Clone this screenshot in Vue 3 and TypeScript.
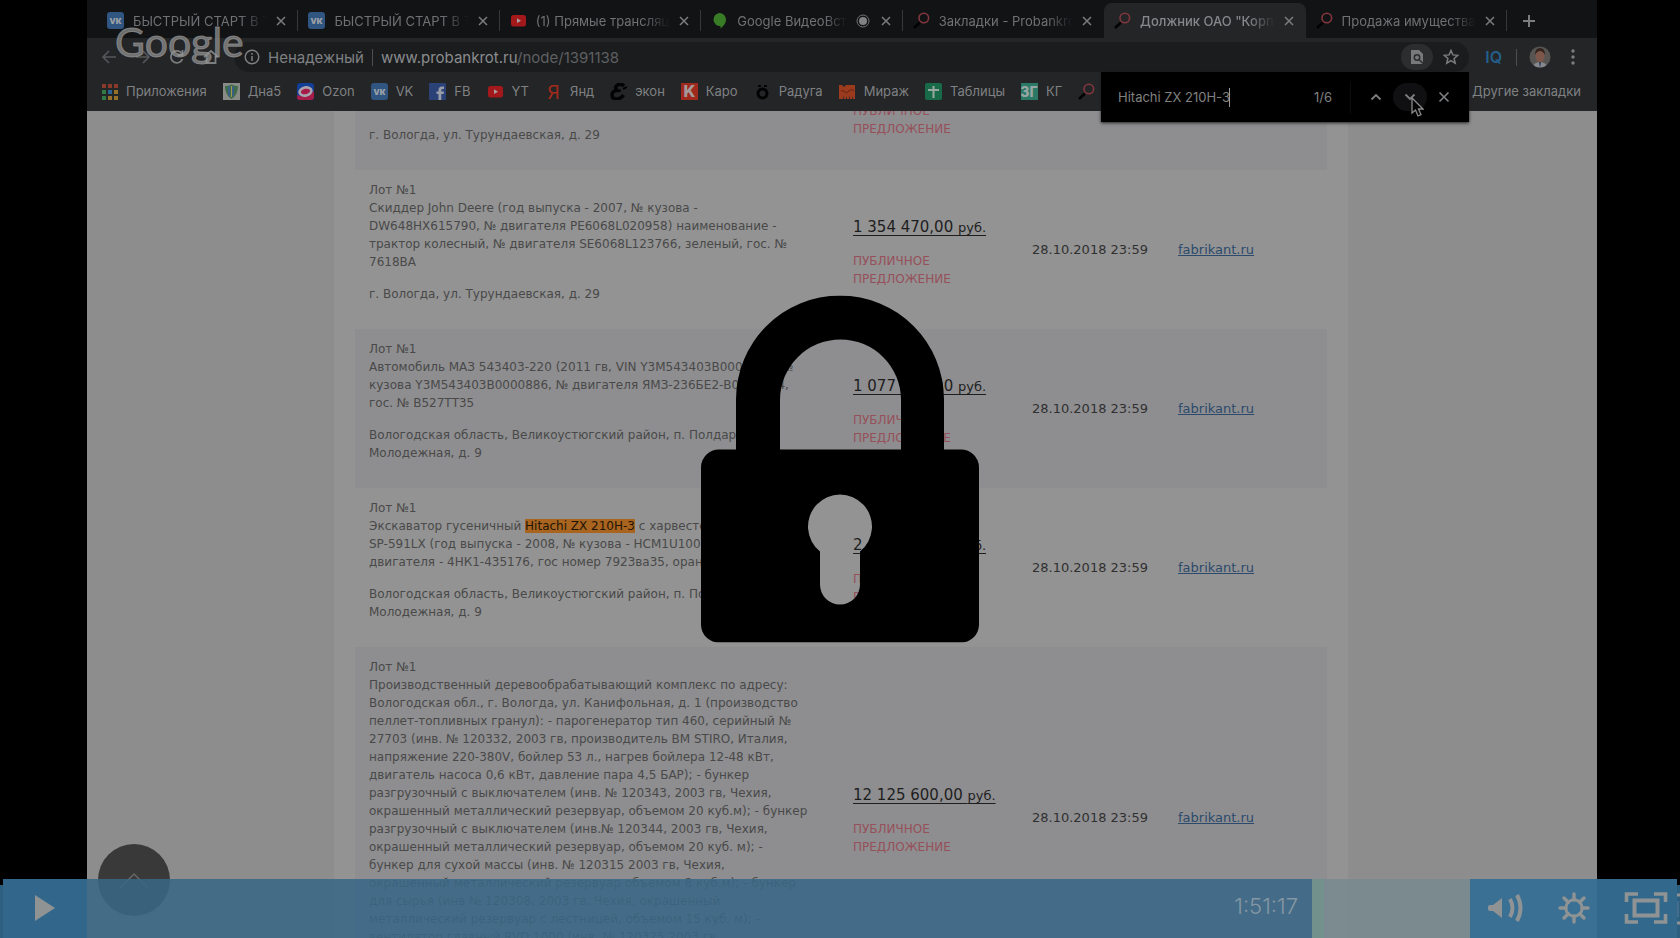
<script setup lang="ts">
import { ref } from 'vue'

interface Tab { icon: string; title: string; active?: boolean; recording?: boolean }
interface Bookmark { icon: string; label: string }
interface Lot {
  lines: string[]
  address: string[]
  hit?: string
  price: string
  tall?: boolean
}

const tabs: Tab[] = [
  { icon: 'vk', title: 'БЫСТРЫЙ СТАРТ В ТО' },
  { icon: 'vk', title: 'БЫСТРЫЙ СТАРТ В ТО' },
  { icon: 'yt', title: '(1) Прямые трансляц' },
  { icon: 'hangouts', title: 'Google ВидеоВстр', recording: true },
  { icon: 'glass', title: 'Закладки - Probankro' },
  { icon: 'glass', title: 'Должник ОАО "Корпо', active: true },
  { icon: 'glass', title: 'Продажа имущества' },
]

const bookmarks: Bookmark[] = [
  { icon: 'apps', label: 'Приложения' },
  { icon: 'shield', label: 'Дна5' },
  { icon: 'ozon', label: 'Ozon' },
  { icon: 'vk', label: 'VK' },
  { icon: 'fb', label: 'FB' },
  { icon: 'yt', label: 'YT' },
  { icon: 'ya', label: 'Янд' },
  { icon: 'econ', label: 'экон' },
  { icon: 'karo', label: 'Каро' },
  { icon: 'raduga', label: 'Радуга' },
  { icon: 'mirage', label: 'Мираж' },
  { icon: 'sheets', label: 'Таблицы' },
  { icon: 'kg', label: 'КГ' },
  { icon: 'glass', label: '' },
]

const lots: Lot[] = [
  {
    lines: [
      'Скиддер John Deere (год выпуска - 2007, № кузова -',
      'DW648HX615790, № двигателя PE6068L020958) наименование -',
      'трактор колесный, № двигателя SE6068L123766, зеленый, гос. №',
      '7618ВА',
    ],
    address: ['г. Вологда, ул. Турундаевская, д. 29'],
    price: '1 354 470,00',
  },
  {
    lines: [
      'Автомобиль МАЗ 543403-220 (2011 гв, VIN Y3M543403B0000886, №',
      'кузова Y3M543403B0000886, № двигателя ЯМЗ-236БЕ2-B0039034,',
      'гос. № В527ТТ35',
    ],
    address: ['Вологодская область, Великоустюгский район, п. Полдарса, ул.', 'Молодежная, д. 9'],
    price: '1 077 300,00',
  },
  {
    lines: [
      'Экскаватор гусеничный |с харвестерной головкой',
      'SP-591LX (год выпуска - 2008, № кузова - HCM1U100H00031, №',
      'двигателя - 4НК1-435176, гос номер 7923ва35, оранжевый',
    ],
    hit: 'Hitachi ZX 210H-3',
    address: ['Вологодская область, Великоустюгский район, п. Полдарса, ул.', 'Молодежная, д. 9'],
    price: '2 430 000,00',
  },
  {
    lines: [
      'Производственный деревообрабатывающий комплекс по адресу:',
      'Вологодская обл., г. Вологда, ул. Канифольная, д. 1 (производство',
      'пеллет-топливных гранул): - парогенератор тип 460, серийный №',
      '27703 (инв. № 120332, 2003 гв, производитель ВМ STIRO, Италия,',
      'напряжение 220-380V, бойлер 53 л., нагрев бойлера 12-48 кВт,',
      'двигатель насоса 0,6 кВт, давление пара 4,5 БАР); - бункер',
      'разгрузочный с выключателем (инв. № 120343, 2003 гв, Чехия,',
      'окрашенный металлический резервуар, объемом 20 куб.м); - бункер',
      'разгрузочный с выключателем (инв.№ 120344, 2003 гв, Чехия,',
      'окрашенный металлический резервуар, объемом 20 куб. м); -',
      'бункер для сухой массы (инв. № 120315 2003 гв, Чехия,',
      'окрашенный металлический резервуар объемом 8 куб.м); - бункер',
      'для сырья (инв № 120308, 2003 гв, Чехия, окрашенный',
      'металлический резервуар с лестницей, объемом 15 куб. м); -',
      'вентилятор главный RVD 1000 (инв. № 120325 2003 гв,',
    ],
    address: [],
    price: '12 125 600,00',
    tall: true,
  },
]

const url = ref('www.probankrot.ru/node/1391138')
const query = ref('Hitachi ZX 210H-3')
</script>

<template>
  <main class="player">
    <svg class="defs" aria-hidden="true">
      <symbol id="i-vk" viewBox="0 0 17 17"><rect width="17" height="17" rx="3" fill="#2f5580" /><text x="8.500" y="12" text-anchor="middle" font-family="Inter, sans-serif" font-weight="800" font-size="10" fill="#9a9fa6">vк</text></symbol>
      <symbol id="i-yt" viewBox="0 0 17 17"><rect x="1" y="3" width="15" height="11.500" rx="2.500" fill="#a3181b" /><path d="M7 6.300 11 8.700 7 11.100z" fill="#a8a0a0" /></symbol>
      <symbol id="i-hangouts" viewBox="0 0 17 17"><path d="M8.500 1a6.500 6.500 0 0 1 6.500 6.500c0 4-3 7-5.500 9V14A6.500 6.500 0 1 1 8.500 1z" fill="#387d26" /></symbol>
      <symbol id="i-glass" viewBox="0 0 17 17"><path d="M7 10.500 1 16" stroke="#020202" stroke-width="2.500" /><circle cx="10.800" cy="6" r="4.800" fill="none" stroke="#81373d" stroke-width="1.600" /></symbol>
      <symbol id="i-apps" viewBox="0 0 17 17">
        <path d="M1 1h4v4H1zM7 1h4v4H7zM13 1h4v4h-4z" fill="#8a3a2a" /><path d="M1 7h4v4H1z" fill="#2f7a45" /><path d="M7 7h4v4H7z" fill="#2c6395" /><path d="M13 7h4v4h-4zM7 13h4v4H7zM13 13h4v4h-4z" fill="#94702b" /><path d="M1 13h4v4H1z" fill="#2f7a45" />
      </symbol>
      <symbol id="i-shield" viewBox="0 0 17 17"><path d="M0 0h17v17H0z" fill="#898c86" /><path d="M2 3q3 0 6.500-1.500Q12 3 15 3q0 9-6.500 13Q2 12 2 3z" fill="#3f6b4b" /><path d="M5 4v8l2 2V3zM11 4v8l-2 2V3z" fill="#385f87" /><path d="M8 3h1v11H8z" fill="#a19a49" /></symbol>
      <symbol id="i-ozon" viewBox="0 0 17 17"><rect width="17" height="17" rx="3" fill="#123e96" /><path d="M0 12q8 4 17-4v6q0 3-3 3H3q-3 0-3-3z" fill="#a51c49" /><ellipse cx="8.500" cy="8.500" rx="6" ry="4" fill="#a51c49" stroke="#a9a4b0" stroke-width="2.600" transform="rotate(-12 8.500 8.500)" /></symbol>
      <symbol id="i-fb" viewBox="0 0 17 17"><rect width="17" height="17" rx="1" fill="#2b4278" /><path d="M9.500 17v-6H7.500V8.500h2V7q0-3.500 3.500-3.500h2V6h-1.500Q12.300 6 12.300 7.300v1.200H15L14.600 11h-2.300v6z" fill="#989da8" /></symbol>
      <symbol id="i-ya" viewBox="0 0 17 17"><text x="8.500" y="15.500" text-anchor="middle" font-family="Inter, sans-serif" font-size="19" fill="#a32b1c">Я</text></symbol>
      <symbol id="i-econ" viewBox="0 0 17 17"><path d="M14 3Q11 0 7.500 2T7 7.500Q2 8 2 12t4.500 4 7-4" fill="none" stroke="#030303" stroke-width="3.500" /><path d="M7 7.500h4M13 6l4-2" stroke="#030303" stroke-width="2" /></symbol>
      <symbol id="i-karo" viewBox="0 0 17 17"><path d="M0 0h17v17H0z" fill="#a0291e" /><text x="8.500" y="14" text-anchor="middle" font-family="Inter, sans-serif" font-weight="800" font-size="16" fill="#a39b99">K</text></symbol>
      <symbol id="i-raduga" viewBox="0 0 17 17"><circle cx="8.500" cy="10.500" r="4.500" fill="none" stroke="#030303" stroke-width="3" /><path d="M4 2h3v2H4zM10 2h3v2h-3z" fill="#030303" /></symbol>
      <symbol id="i-mirage" viewBox="0 0 17 17"><path d="M0 2h3l2 2 2-2h9v14h-2v-3l-1 3h-2v-4l-1 4H8v-3l-1 3H5v-4l-1 4H0z" fill="#9b3a1c" /><path d="M2 8q3-1 4 1t4-1 5 0" fill="none" stroke="#5f2416" /></symbol>
      <symbol id="i-sheets" viewBox="0 0 17 17"><rect width="17" height="17" rx="2" fill="#186a48" /><path d="M8.500 3v12M3 7h11" stroke="#98a79f" stroke-width="2" /></symbol>
      <symbol id="i-kg" viewBox="0 0 17 17"><path d="M0 0h17v17H0z" fill="#2c7867" /><text x="8" y="14" text-anchor="middle" font-family="Inter, sans-serif" font-weight="800" font-size="14" fill="#98a7a3">ЗГ</text></symbol>
    </svg>

    <section class="browser">
      <header class="chrome">
        <nav class="tabs" aria-label="Вкладки">
          <div v-for="(tab, i) in tabs" :key="i" class="tab" :class="{ active: tab.active }">
            <svg class="icon"><use :href="'#i-' + tab.icon" /></svg>
            <span class="title">{{ tab.title }}</span>
            <svg v-if="tab.recording" class="rec" viewBox="0 0 14 14"><circle cx="7" cy="7" r="6" fill="none" stroke="#6f7173" /><circle cx="7" cy="7" r="4" fill="#808284" /></svg>
            <button class="plain" aria-label="Закрыть вкладку"><svg width="10" height="10" viewBox="0 0 10 10"><path d="m1 1 8 8M9 1 1 9" stroke="currentColor" stroke-width="1.500" /></svg></button>
          </div>
          <button class="plain add" aria-label="Новая вкладка"><svg width="14" height="14" viewBox="0 0 14 14"><path d="M7 1v12M1 7h12" stroke="currentColor" stroke-width="2" /></svg></button>
        </nav>

        <div class="toolbar">
          <div class="navs">
            <button class="plain dim" aria-label="Назад"><svg width="16" height="16" viewBox="0 0 16 16"><path d="M15 8H2m6-6L2 8l6 6" fill="none" stroke="currentColor" stroke-width="1.600" /></svg></button>
            <button class="plain dim" aria-label="Вперед"><svg width="16" height="16" viewBox="0 0 16 16"><path d="M1 8h13M8 2l6 6-6 6" fill="none" stroke="currentColor" stroke-width="1.600" /></svg></button>
            <button class="plain" aria-label="Обновить"><svg width="16" height="16" viewBox="0 0 16 16"><path d="M13.500 10A6 6 0 1 1 12.500 4M13.500 1v5h-5" fill="none" stroke="currentColor" stroke-width="1.800" /></svg></button>
            <button class="plain" aria-label="Домой"><svg width="16" height="16" viewBox="0 0 16 16"><path d="M1 8l7-6 7 6M3.500 7v7h9V7" fill="none" stroke="currentColor" stroke-width="1.800" /></svg></button>
          </div>
          <div class="omnibox">
            <svg width="16" height="16" viewBox="0 0 16 16"><circle cx="8" cy="8" r="6.800" fill="none" stroke="currentColor" stroke-width="1.400" /><path d="M8 7v5M8 4v1.700" stroke="currentColor" stroke-width="1.500" /></svg>
            <span class="warn">Ненадежный</span>
            <span class="bar"></span>
            <a class="url" :href="'#' + url">www.probankrot.ru<i>/node/1391138</i></a>
            <button class="plain round" aria-label="Найти"><svg width="14" height="16" viewBox="0 0 14 16"><path d="M1 1h8l4 4v10H1z" fill="#77797b" /><circle cx="7" cy="8.500" r="2.700" fill="none" stroke="#2a2b2d" stroke-width="1.500" /><path d="m9 10.500 4 4" stroke="#2a2b2d" stroke-width="1.500" /></svg></button>
            <button class="plain star" aria-label="В закладки"><svg width="16" height="16" viewBox="0 0 16 16"><path d="m8 1.500 1.900 4.400 4.800.4-3.600 3.100 1.100 4.700L8 11.600l-4.200 2.500 1.100-4.700L1.300 6.300l4.800-.4z" fill="none" stroke="currentColor" stroke-width="1.500" /></svg></button>
          </div>
          <span class="iq">IQ</span>
          <span class="bar"></span>
          <svg class="avatar" viewBox="0 0 22 22"><clipPath id="face"><circle cx="11" cy="11" r="10.500" /></clipPath><g clip-path="url(#face)"><path d="M0 0h22v22H0z" fill="#575553" /><path d="M3 22q2-6 8-6t8 6z" fill="#85898f" /><ellipse cx="11" cy="10" rx="4.500" ry="6.500" fill="#7d5749" /><path d="M6 9q0-7 5-7t5 7q-2-4-5-4T6 9z" fill="#33221d" /><path d="m10 16 1 6 1-6z" fill="#26384f" /></g></svg>
          <button class="plain" aria-label="Меню"><svg width="4" height="16" viewBox="0 0 4 16"><circle cx="2" cy="2" r="1.700" fill="currentColor" /><circle cx="2" cy="8" r="1.700" fill="currentColor" /><circle cx="2" cy="14" r="1.700" fill="currentColor" /></svg></button>
        </div>

        <nav class="bookmarks" aria-label="Закладки">
          <a v-for="b in bookmarks" :key="b.icon" href="#" class="bookmark" :aria-label="b.label || 'Probankrot'">
            <svg class="icon"><use :href="'#i-' + b.icon" /></svg><span v-if="b.label">{{ b.label }}</span>
          </a>
          <a href="#" class="others">Другие закладки</a>
        </nav>
        <div class="watermark">Google</div>

        <form class="find" @submit.prevent>
          <input v-model="query" aria-label="Поиск на странице" spellcheck="false" />
          <span class="count">1/6</span>
          <span class="split"></span>
          <button class="plain" type="button" aria-label="Предыдущее"><svg width="12" height="8" viewBox="0 0 12 8"><path d="m1.500 6.500 4.500-4.500 4.500 4.500" fill="none" stroke="currentColor" stroke-width="1.800" /></svg></button>
          <button class="plain hover" type="button" aria-label="Следующее"><svg width="12" height="8" viewBox="0 0 12 8"><path d="m1.500 1.500 4.500 4.500 4.500-4.500" fill="none" stroke="currentColor" stroke-width="1.800" /></svg></button>
          <button class="plain" type="button" aria-label="Закрыть"><svg width="12" height="12" viewBox="0 0 12 12"><path d="m1.500 1.500 9 9M10.500 1.500l-9 9" stroke="currentColor" stroke-width="1.700" /></svg></button>
          <svg class="cursor" viewBox="0 0 13 20"><path d="M1 1v15l3.500-3 2.500 6 3-1.300-2.500-5.700H12z" fill="#050505" stroke="#8b8b8b" stroke-width="1.300" /></svg>
        </form>
      </header>

      <div class="page">
        <div class="panel">
          <table>
            <colgroup><col class="c-lot" /><col class="c-price" /><col class="c-date" /><col /></colgroup>
            <tbody>
              <tr class="partial">
                <td class="lot">г. Вологда, ул. Турундаевская, д. 29</td>
                <td class="kind">ПУБЛИЧНОЕ<br />ПРЕДЛОЖЕНИЕ</td>
                <td></td>
                <td></td>
              </tr>
              <tr v-for="lot in lots" :key="lot.price" :class="{ tall: lot.tall }">
                <td class="lot">
                  <p>
                    Лот №1
                    <template v-for="line in lot.lines" :key="line"><br /><template v-if="line.includes('|')">{{ line.split('|')[0] }}<mark>{{ lot.hit }}</mark>{{ ' ' + line.split('|')[1] }}</template><template v-else>{{ line }}</template></template>
                  </p>
                  <p v-if="lot.address.length"><template v-for="(a, i) in lot.address" :key="a"><br v-if="i" />{{ a }}</template></p>
                </td>
                <td class="price">
                  <strong>{{ lot.price }} <small>руб.</small></strong>
                  <div class="kind">ПУБЛИЧНОЕ<br />ПРЕДЛОЖЕНИЕ</div>
                </td>
                <td class="date">28.10.2018 23:59</td>
                <td><a href="#">fabrikant.ru</a></td>
              </tr>
            </tbody>
          </table>
        </div>
        <button class="totop" aria-label="Наверх"><svg width="30" height="17" viewBox="0 0 30 17"><path d="m1 16 14-14 14 14" fill="none" stroke="#666" stroke-width="1.500" /></svg></button>
      </div>
    </section>

    <svg class="lock" viewBox="0 0 278 347" role="img" aria-label="Заблокировано">
      <path fill-rule="evenodd" d="M35 154v-50a104 104 0 0 1 208 0v50h17a18 18 0 0 1 18 18v157a18 18 0 0 1-18 18H18a18 18 0 0 1-18-18V172a18 18 0 0 1 18-18zM79 154h121v-49.500a60.500 60.500 0 0 0-121 0zM119 256v33a20 20 0 0 0 40 0v-33a32 32 0 1 0-40 0z" />
    </svg>

    <footer class="controls">
      <div class="edge"></div>
      <button class="play" aria-label="Воспроизвести"><svg width="20" height="26" viewBox="0 0 20 26"><path d="M0 0v26l20-13z" fill="#8f9394" /></svg></button>
      <div class="played"><time>1:51:17</time></div>
      <div class="loaded"></div>
      <div class="rest"></div>
      <div class="buttons">
        <button aria-label="Громкость"><svg width="36" height="30" viewBox="0 0 36 30"><path d="M1 12q0-2 2-2h3l9-7v20l-9-7H3q-2 0-2-2z" transform="translate(0 2)" fill="#8f9394" /><path d="M23 6q5 9 0 18M30 2q7 13 0 26" fill="none" stroke="#8f9394" stroke-width="4" /></svg></button>
        <button aria-label="Настройки"><svg width="32" height="32" viewBox="0 0 32 32"><circle cx="16" cy="16" r="8.200" fill="none" stroke="#8f9394" stroke-width="3" /><path d="M16 8V2M16 24v6M8 16H2M24 16h6M10.300 10.300 6 6M21.700 10.300 26 6M10.300 21.700 6 26M21.700 21.700 26 26" stroke="#8f9394" stroke-width="3.400" stroke-linecap="round" /></svg></button>
        <button aria-label="Во весь экран"><svg width="44" height="32" viewBox="0 0 44 32"><path d="M10.500 8.500h23v15h-23z" fill="none" stroke="#8f9394" stroke-width="4" /><path d="M2.500 10V2H14M30 2h11.500v8M41.500 22v8H30M14 30H2.500v-8" fill="none" stroke="#8f9394" stroke-width="3.600" /></svg></button>
      </div>
      <div class="edge tail"><svg width="3" height="32" viewBox="0 0 3 32"><path d="M0 2h3M0 30h3" stroke="#8f9394" stroke-width="3" /><path d="M1 8v16" stroke="#5a7d93" /></svg></div>
    </footer>
  </main>
</template>

<style>
body { background: #000; }
</style>

<style scoped>
* { box-sizing: border-box; }
.player { position: relative; display: flex; height: 100vh; padding: 0 83px 0 87px; overflow: hidden; background: #000; }
.defs { position: absolute; width: 0; height: 0; }
.browser { flex: 1; min-width: 0; display: flex; flex-direction: column; }
button { border: 0; padding: 0; background: none; color: inherit; font: inherit; }
.plain { display: flex; align-items: center; justify-content: center; flex: none; color: #7b7d7f; }
.icon { flex: none; width: 17px; height: 17px; }

.chrome { position: relative; z-index: 1; flex: none; background: #242527; color: #7f8183; font-family: Inter, "Noto Sans", sans-serif; }
.tabs { display: flex; height: 38px; padding: 3px 0 0 10px; background: #121315; }
.tab { position: relative; flex: 1 1 0; min-width: 0; display: flex; align-items: center; gap: 9px; padding: 0 12px 0 10px; font-size: 13px; line-height: 20px; color: #6f7173; }
.tab::after { content: ""; position: absolute; right: 0; top: 7px; width: 1px; height: 21px; background: #37383a; }
.tab.active { background: #242527; border-radius: 8px 8px 0 0; color: #85878a; font-weight: 500; }
.tab.active::after, .tab:has(+ .active)::after { display: none; }
.title { flex: 1; min-width: 0; overflow: hidden; white-space: nowrap; mask-image: linear-gradient(90deg, #000 80%, transparent); }
.rec { flex: none; width: 14px; height: 14px; margin-right: 2px; }
.add { width: 44px; margin-right: 46px; }

.toolbar { display: flex; align-items: center; height: 38px; padding: 0 22px 0 14px; }
.navs { display: flex; gap: 18px; }
.dim { color: #55575a; }
.bar { flex: none; width: 1px; height: 17px; background: #4c4e50; }
.omnibox { flex: 1; display: flex; align-items: center; height: 30px; margin-left: 15px; padding: 0 10px; border-radius: 15px; background: #1b1c1e; font-size: 15px; }
.warn { margin: 0 8px; }
.url { flex: 1; margin-left: 8px; color: #8a8c8e; font-size: 15px; text-decoration: none; }
.url i { font-style: normal; color: #5e6062; }
.round { width: 32px; height: 26px; border-radius: 13px; background: #2c2d2f; }
.star { margin-left: 10px; }
.iq { margin: 0 14px 0 16px; color: #235f8b; font-size: 16px; font-weight: 600; }
.avatar { width: 22px; height: 22px; margin: 0 20px 0 12px; }

.bookmarks { display: flex; align-items: center; gap: 16px; height: 35px; padding: 0 16px 5px 14px; font-size: 13px; line-height: 18px; }
.bookmarks a { color: inherit; text-decoration: none; white-space: nowrap; }
.bookmark { display: flex; align-items: center; gap: 8px; }
.others { margin-left: auto; }
.watermark { position: absolute; left: 28px; top: 16px; color: rgba(150, 150, 150, .7); font: 400 41px/52px Lato, sans-serif; -webkit-text-stroke: 1px rgba(150, 150, 150, .7); }

.find { position: absolute; right: 128px; top: 72px; width: 368px; height: 50px; display: flex; align-items: center; padding-left: 17px; background: #000; box-shadow: 0 1px 3px #222; font-size: 13px; }
.find input { width: 112px; height: 19px; border: 0; border-right: 1px solid #9a9a9a; padding: 0; background: none; color: #808080; font: 400 13px/18px Inter, sans-serif; outline: 0; }
.count { margin-left: auto; }
.split { width: 1px; height: 33px; margin: 0 8px 0 18px; background: #0d0d0e; }
.find button { width: 34px; height: 28px; }
.find .hover { border-radius: 14px; background: #101012; }
.find button:last-of-type { margin-right: 8px; }
.cursor { position: absolute; left: 310px; top: 25px; width: 13px; height: 20px; }

.page { position: relative; flex: 1; min-height: 0; overflow: hidden; padding: 0 249px 0 247px; background: #8d8d8d; }
.panel { padding: 0 21px; background: #939393; }
table { width: 100%; margin-top: -9px; border-collapse: collapse; table-layout: fixed; color: #303030; font: 12px/18px "DejaVu Sans", sans-serif; }
.c-lot { width: 484px; }
.c-price { width: 179px; }
.c-date { width: 146px; }
tr:nth-child(odd) { background: #8e8e90; }
td { height: 159px; padding: 0 0 0 14px; vertical-align: middle; white-space: nowrap; }
.partial td { height: 68px; vertical-align: top; }
.partial .lot { padding-top: 24px; }
.tall td { height: 341px; }
.lot { padding: 11px 0 0 14px; vertical-align: top; color: #494949; }
p { margin: 0 0 14px; }
mark { background: #a9641f; color: #221507; }
.price { padding-top: 7px; }
strong { display: block; width: max-content; margin-bottom: 15px; color: #1e1e1e; font-weight: 400; font-size: 15px; line-height: 18px; text-decoration: underline; text-underline-offset: 3px; }
small { font-size: 13px; }
.kind { color: #96505a; }
.date { font-size: 13px; }
td a { color: #2c4a6c; font-size: 13px; }
.totop { position: absolute; left: 11px; top: 733px; display: flex; align-items: center; justify-content: center; width: 72px; height: 72px; border-radius: 50%; background: #393939; }

.lock { position: absolute; left: 50%; top: 50%; width: 278px; height: 347px; transform: translate(-50%, -50%); }

.controls { position: absolute; inset: auto 0 0 0; display: flex; height: 59px; }
.edge { flex: none; width: 3px; margin-top: 6px; background: #2d5f80; }
.play { width: 84px; display: flex; align-items: center; padding: 0 0 2px 32px; background: #32678b; }
.played { flex: 1; display: flex; align-items: center; justify-content: flex-end; padding: 0 14px 6px 0; background: rgba(58, 103, 134, .87); }
time { color: #8497a3; font: 300 22px/28px Inter, sans-serif; }
.loaded { width: 12px; background: #73918c; }
.rest { width: 146px; background: rgba(121, 138, 144, .88); }
.buttons { display: flex; align-items: center; justify-content: space-between; width: 207px; padding: 0 9px 2px 17px; background: rgba(53, 110, 149, .94); }
.buttons button { display: flex; }
.tail svg { display: block; margin-top: 8px; }
</style>
